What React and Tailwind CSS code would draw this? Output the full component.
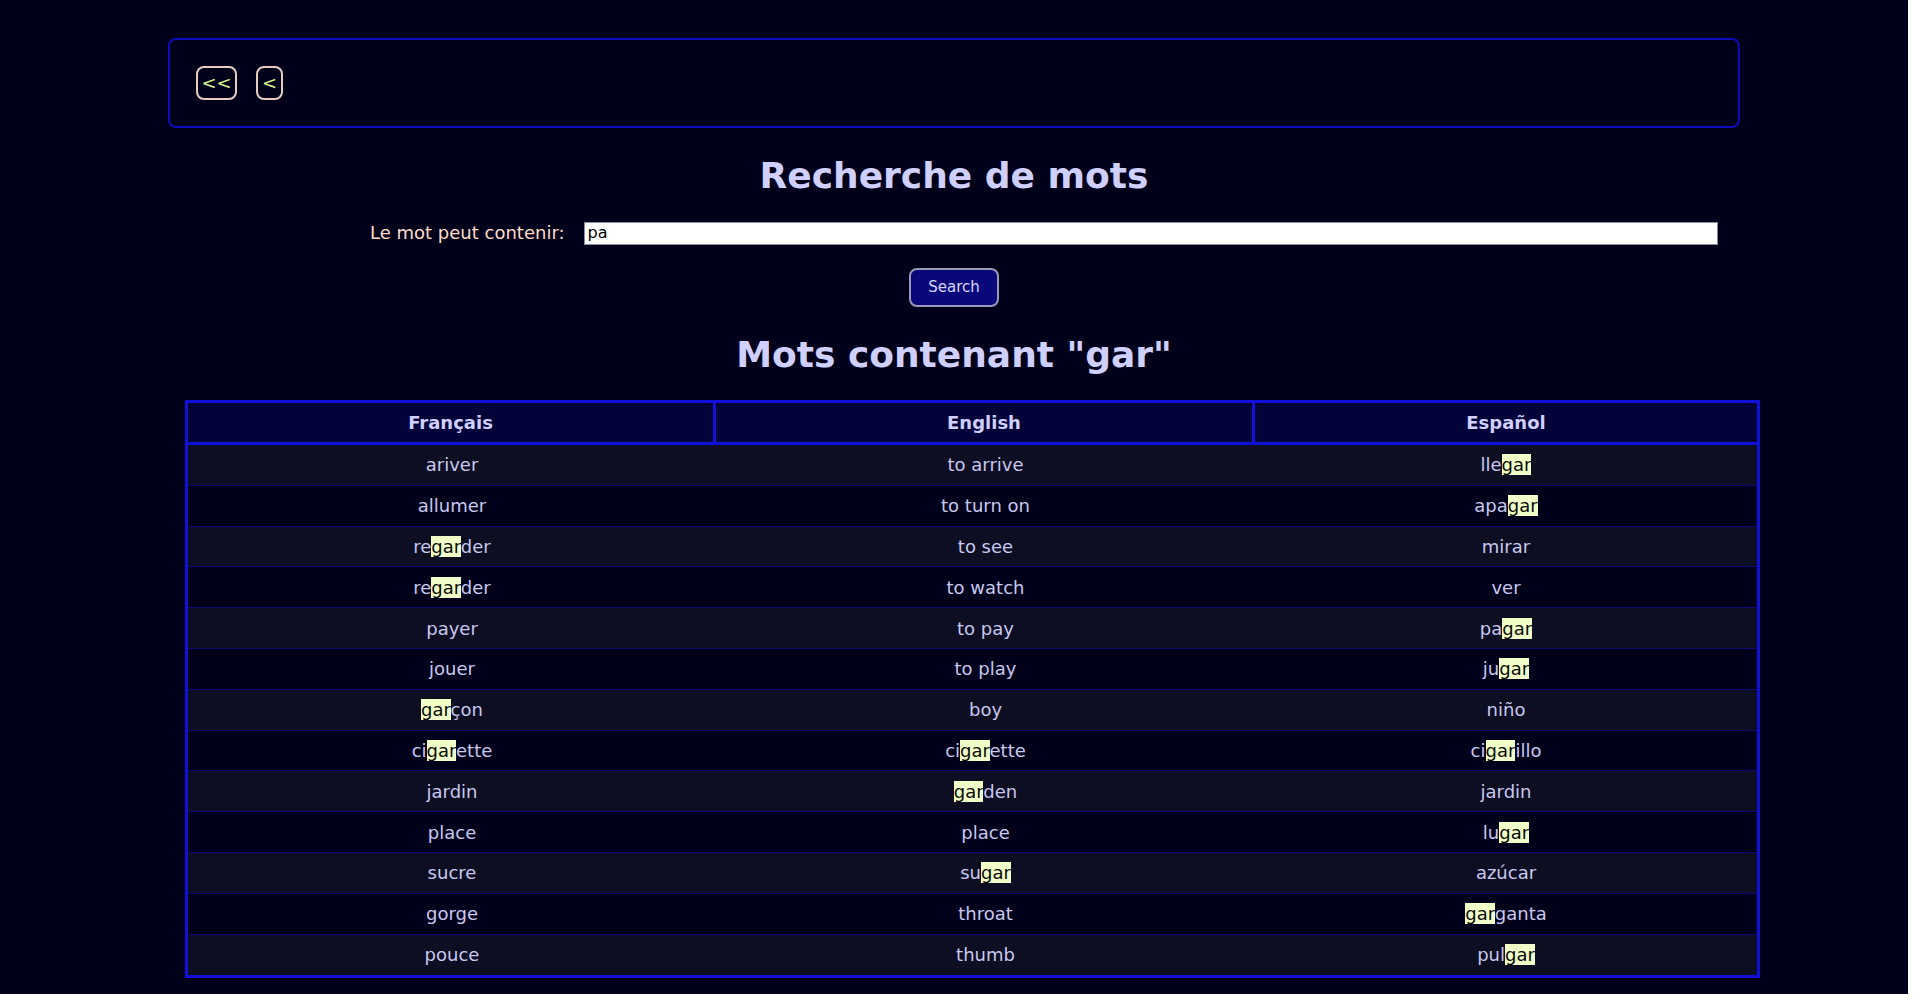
import React from 'react'

const rows = [
  ['ariver', 'to arrive', 'llegar'],
  ['allumer', 'to turn on', 'apagar'],
  ['regarder', 'to see', 'mirar'],
  ['regarder', 'to watch', 'ver'],
  ['payer', 'to pay', 'pagar'],
  ['jouer', 'to play', 'jugar'],
  ['garçon', 'boy', 'niño'],
  ['cigarette', 'cigarette', 'cigarillo'],
  ['jardin', 'garden', 'jardin'],
  ['place', 'place', 'lugar'],
  ['sucre', 'sugar', 'azúcar'],
  ['gorge', 'throat', 'garganta'],
  ['pouce', 'thumb', 'pulgar'],
]

function Highlight({ word, term }) {
  const parts = word.split(term)
  return (
    <>
      {parts.map((p, i) => (
        <React.Fragment key={i}>
          {p}
          {i < parts.length - 1 && (
            <span className="bg-[#f0ffc8] text-[#0a0a0a]">{term}</span>
          )}
        </React.Fragment>
      ))}
    </>
  )
}

export default function App() {
  return (
    <div className="w-[1908px] h-[994px] overflow-hidden bg-[#00001a] font-['DejaVu_Sans',sans-serif]">
      {/* Nav */}
      <div className="mx-[168px] mt-[38px] h-[90px] border-2 border-[#0c0cb8] rounded-lg flex items-center gap-[19px] pl-[26px]">
        <button className="h-[34px] w-[41px] rounded-lg border-2 border-[#e6cdc4] text-[18px] text-[#d4f28a] leading-none">
          &lt;&lt;
        </button>
        <button className="h-[34px] w-[27px] rounded-lg border-2 border-[#e6cdc4] text-[18px] text-[#d4f28a] leading-none">
          &lt;
        </button>
      </div>

      <h1 className="mt-[27px] text-center text-[36px] font-bold leading-[42px] text-[#d0d0ff]">
        Recherche de mots
      </h1>

      {/* Search form */}
      <div className="mt-[24px] ml-[370px] flex items-center h-[24px]">
        <label className="text-[18px] text-[#ffdcc8] leading-none">Le mot peut contenir:</label>
        <input
          type="text"
          defaultValue="pa"
          className="ml-[19px] w-[1134px] h-[23px] bg-white border border-[#8a8a9a] px-[3px] text-[16px] text-black font-['DejaVu_Sans',sans-serif] outline-none"
        />
      </div>

      <div className="mt-[23px] flex justify-center">
        <button className="w-[90px] h-[39px] rounded-lg border-2 border-[#9a9ab8] bg-[#08087a] text-[15px] text-[#d8d8ff]">
          Search
        </button>
      </div>

      <h2 className="mt-[27px] text-center text-[36px] font-bold leading-[42px] text-[#d0d0ff]">
        Mots contenant "gar"
      </h2>

      {/* Results table */}
      <div className="mt-[24px] ml-[185px] w-[1575px] border-[3px] border-[#1010d8]">
        <div className="grid grid-cols-[528px_539px_1fr] h-[42px] bg-[#03033a] border-b-[3px] border-[#1010d8] text-[18px] font-bold text-[#d0d0ff]">
          <div className="flex items-center justify-center border-r-[3px] border-[#1010d8]">Français</div>
          <div className="flex items-center justify-center border-r-[3px] border-[#1010d8]">English</div>
          <div className="flex items-center justify-center">Español</div>
        </div>
        {rows.map((r, i) => (
          <div
            key={i}
            className={`grid grid-cols-[528px_539px_1fr] h-[40.8px] text-[18px] text-[#c8c8f0] ${
              i % 2 === 0 ? 'bg-[#0e0e22]' : 'bg-[#00001a]'
            } ${i < rows.length - 1 ? 'border-b border-[#0a0a78]' : ''}`}
          >
            {r.map((w, j) => (
              <div key={j} className="flex items-center justify-center">
                <span>
                  <Highlight word={w} term="gar" />
                </span>
              </div>
            ))}
          </div>
        ))}
      </div>
    </div>
  )
}
